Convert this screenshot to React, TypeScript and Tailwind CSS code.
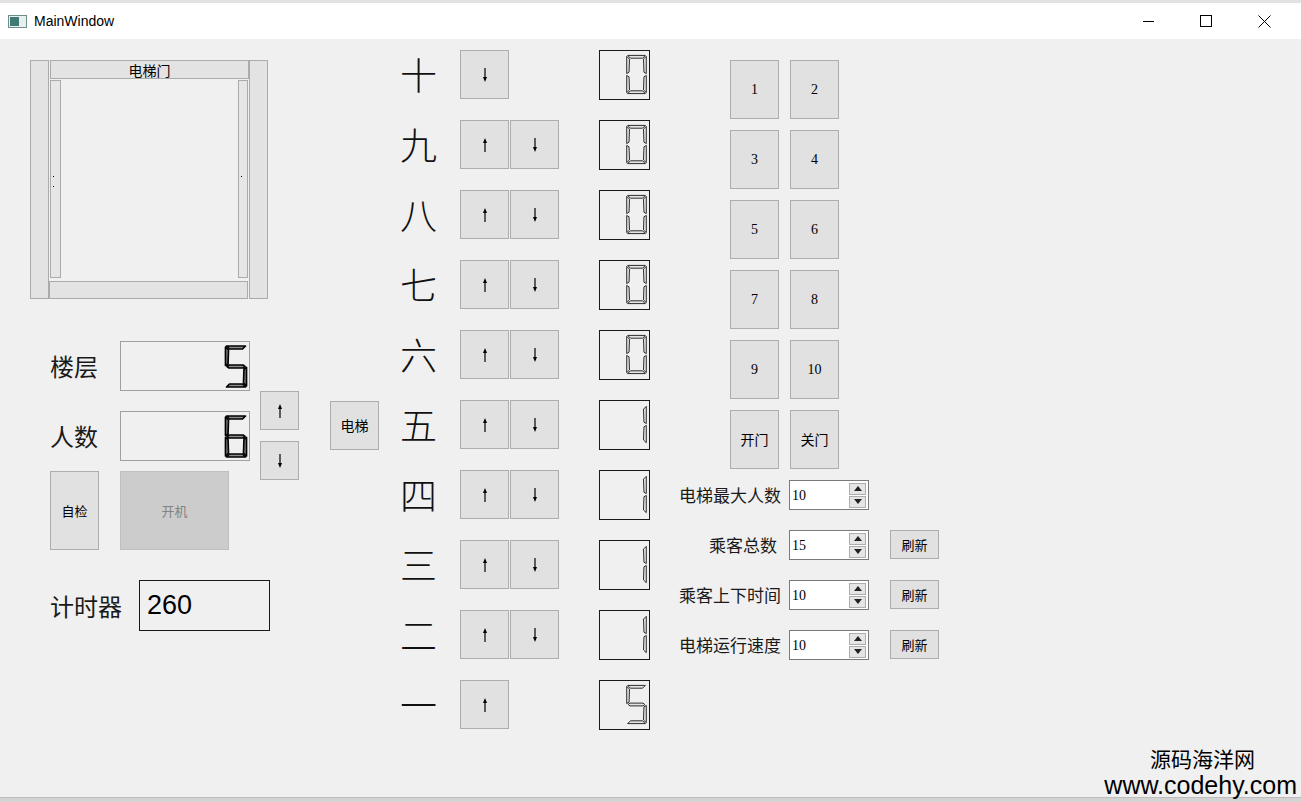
import React from "react"

const cjk = "font-['Noto_Sans_CJK_SC',sans-serif]"
const btn = "flex items-center justify-center border border-[#adadad] bg-[#e1e1e1] text-[13px] text-black"

// seven segment polygons, viewBox 0 0 22 42
const SEG: Record<string, string> = {
  a: "1.5,0.5 20.5,0.5 17.5,3.5 4.5,3.5",
  b: "21.5,1.5 21.5,20 19,18.5 18.5,4.5",
  c: "21.5,22 21.5,40.5 18.5,37.5 19,23.5",
  d: "1.5,41.5 20.5,41.5 17.5,38.5 4.5,38.5",
  e: "0.5,22 0.5,40.5 3.5,37.5 3,23.5",
  f: "0.5,1.5 0.5,20 3,18.5 3.5,4.5",
  g: "2,21 4,19.5 18,19.5 20,21 18,22.5 4,22.5",
}
const DIGITS: Record<string, string> = {
  "0": "abcdef",
  "1": "bc",
  "5": "afgcd",
  "6": "afgedc",
}

function Digit({ v, w, h, bold }: { v: number; w: number; h: number; bold?: boolean }) {
  const on = DIGITS[String(v)] ?? ""
  return (
    <svg width={w} height={h} viewBox="-1 -1 24 44">
      {on.split("").map((s) => (
        <polygon
          key={s}
          points={SEG[s]}
          fill={bold ? "#8c8c8c" : "#e4e4e4"}
          stroke={bold ? "#000" : "#1e1e1e"}
          strokeWidth={bold ? 1.7 : 1}
          strokeLinejoin="round"
        />
      ))}
    </svg>
  )
}

function Arrow({ up }: { up?: boolean }) {
  return (
    <svg width="6" height="14" viewBox="0 0 6 14" className={up ? "" : "rotate-180"}>
      <line x1="3" y1="3" x2="3" y2="14" stroke="#000" strokeWidth="1.2" />
      <polygon points="1,5 3,0 5,5" fill="#000" />
    </svg>
  )
}

function SpinBox({ value }: { value: number }) {
  return (
    <div className="flex h-[30px] w-[80px] items-center border border-[#7a7a7a] bg-white">
      <span className="flex-1 pl-[2px] font-['Liberation_Serif',serif] text-[14px] text-black">{value}</span>
      <div className="mr-[2px] flex h-[25px] w-[17px] flex-col gap-[1px]">
        <div className="flex flex-1 items-center justify-center border border-[#adadad] bg-[#e5e5e5]">
          <svg width="8" height="5" viewBox="0 0 8 5"><polygon points="0,5 4,0 8,5" fill="#222" /></svg>
        </div>
        <div className="flex flex-1 items-center justify-center border border-[#adadad] bg-[#e5e5e5]">
          <svg width="8" height="5" viewBox="0 0 8 5"><polygon points="0,0 8,0 4,5" fill="#222" /></svg>
        </div>
      </div>
    </div>
  )
}

const floors = [
  { c: "十", up: false, down: true, v: 0 },
  { c: "九", up: true, down: true, v: 0 },
  { c: "八", up: true, down: true, v: 0 },
  { c: "七", up: true, down: true, v: 0 },
  { c: "六", up: true, down: true, v: 0 },
  { c: "五", up: true, down: true, v: 1 },
  { c: "四", up: true, down: true, v: 1 },
  { c: "三", up: true, down: true, v: 1 },
  { c: "二", up: true, down: true, v: 1 },
  { c: "一", up: true, down: false, v: 5 },
]

const keypad = ["1", "2", "3", "4", "5", "6", "7", "8", "9", "10", "开门", "关门"]

const settings = [
  { label: "电梯最大人数", v: 10, refresh: false, pr: "" },
  { label: "乘客总数", v: 15, refresh: true, pr: "pr-[4px]" },
  { label: "乘客上下时间", v: 10, refresh: true, pr: "" },
  { label: "电梯运行速度", v: 10, refresh: true, pr: "" },
]

export default function App() {
  return (
    <div className={`relative flex h-[802px] w-[1301px] flex-col overflow-hidden bg-[#f0f0f0] ${cjk}`}>
      {/* Title bar */}
      <div className="flex h-[39px] items-center border-t-[3px] border-[#e2e2e2] bg-white">
        <div className="ml-[8px] flex h-[13px] w-[19px] border border-[#6f8f8c] bg-[#e9efee]">
          <div className="m-[1px] w-[9px] bg-[#3f7a74]" />
        </div>
        <span className="ml-[7px] font-['Liberation_Sans',sans-serif] text-[14px] text-black">MainWindow</span>
        <div className="flex-1" />
        <div className="flex items-center">
          <div className="flex w-[58px] justify-center">
            <div className="h-[1px] w-[11px] bg-black" />
          </div>
          <div className="flex w-[58px] justify-center">
            <div className="h-[12px] w-[12px] border border-black" />
          </div>
          <div className="flex w-[58px] justify-center">
            <svg width="13" height="13" viewBox="0 0 13 13">
              <path d="M0.5 0.5 L12.5 12.5 M12.5 0.5 L0.5 12.5" stroke="#000" strokeWidth="1" />
            </svg>
          </div>
          <div className="w-[8px]" />
        </div>
      </div>

      {/* Client area */}
      <div className="flex flex-1 items-start">
        {/* Left column */}
        <div className="ml-[30px] mt-[21px] flex w-[350px] flex-col">
          {/* Elevator door */}
          <div className="flex h-[239px] w-[238px]">
            <div className="w-[19px] border border-[#ababab] bg-[#e3e3e3]" />
            <div className="flex w-[200px] flex-col">
              <div className="ml-[1px] flex h-[19px] items-center justify-center border border-[#ababab] bg-[#e3e3e3] text-[14px] leading-none text-black">
                电梯门
              </div>
              <div className="flex flex-1 justify-between pb-[3px] pt-[1px]">
                <div className="relative ml-[1px] w-[11px] border border-[#ababab] bg-[#e6e6e6]">
                  <div className="absolute left-[2px] top-[95px] h-[1px] w-[1px] bg-black" />
                  <div className="absolute left-[2px] top-[105px] h-[1px] w-[1px] bg-black" />
                </div>
                <div className="relative mr-[1px] w-[10px] border border-[#ababab] bg-[#e6e6e6]">
                  <div className="absolute left-[2px] top-[95px] h-[1px] w-[1px] bg-black" />
                </div>
              </div>
              <div className="h-[18px] w-[199px] border border-[#ababab] bg-[#e3e3e3]" />
            </div>
            <div className="w-[19px] border border-[#ababab] bg-[#e3e3e3]" />
          </div>

          {/* Floor / passengers */}
          <div className="mt-[42px] flex items-start">
            <div className="ml-[20px] flex w-[200px] flex-col">
              <div className="flex h-[50px] items-center">
                <span className="w-[70px] text-[24px] text-[#1a1a1a]">楼层</span>
                <div className="flex h-[50px] w-[130px] items-center justify-end border border-[#a0a0a0] pr-[1px]">
                  <Digit v={5} w={24} h={45} bold />
                </div>
              </div>
              <div className="mt-[20px] flex h-[50px] items-center">
                <span className="w-[70px] text-[24px] text-[#1a1a1a]">人数</span>
                <div className="flex h-[50px] w-[130px] items-center justify-end border border-[#a0a0a0] pr-[1px]">
                  <Digit v={6} w={24} h={45} bold />
                </div>
              </div>
              <div className="mt-[10px] flex">
                <div className={`${btn} h-[79px] w-[49px]`}>自检</div>
                <div className="ml-[21px] flex h-[79px] w-[109px] items-center justify-center border border-[#bfbfbf] bg-[#cccccc] text-[13px] text-[#838383]">
                  开机
                </div>
              </div>
            </div>
            <div className="ml-[10px] mt-[50px] flex flex-col gap-[11px]">
              <div className={`${btn} h-[39px] w-[39px]`}><Arrow up /></div>
              <div className={`${btn} h-[39px] w-[39px]`}><Arrow /></div>
            </div>
            <div className={`${btn} ml-[31px] mt-[60px] h-[49px] w-[49px] text-[14px]`}>电梯</div>
          </div>

          {/* Timer */}
          <div className="ml-[20px] mt-[30px] flex items-center">
            <span className="w-[89px] text-[24px] text-[#1a1a1a]">计时器</span>
            <div className="flex h-[51px] w-[131px] items-center border border-[#1a1a1a] pl-[7px] font-['Liberation_Sans',sans-serif] text-[27px] text-black">
              260
            </div>
          </div>
        </div>

        {/* Floor call column */}
        <div className="ml-[20px] mt-[11px] flex flex-col gap-[21px]">
          {floors.map((f) => (
            <div key={f.c} className="flex h-[49px] items-center">
              <span className="w-[60px] text-[37px] font-light leading-none text-[#111]">{f.c}</span>
              <div className="flex h-[49px] w-[100px] gap-[1px]">
                {f.up && <div className={`${btn} h-[49px] w-[49px]`}><Arrow up /></div>}
                {f.down && <div className={`${btn} h-[49px] w-[49px]`}><Arrow /></div>}
              </div>
              <div className="ml-[39px] flex h-[50px] w-[51px] items-center justify-end border border-[#1a1a1a] pr-[1px]">
                <Digit v={f.v} w={23} h={41} />
              </div>
            </div>
          ))}
        </div>

        {/* Keypad and settings */}
        <div className="ml-[29px] mt-[21px] flex flex-col">
          <div className="ml-[51px] grid w-[109px] grid-cols-2 gap-x-[11px] gap-y-[11px]">
            {keypad.map((k) => (
              <div
                key={k}
                className={`${btn} h-[59px] w-[49px] ${/^\d+$/.test(k) ? "font-['Liberation_Serif',serif] text-[14px]" : "text-[14px]"}`}
              >
                {k}
              </div>
            ))}
          </div>
          <div className="mt-[11px] flex flex-col gap-[20px]">
            {settings.map((s) => (
              <div key={s.label} className="flex h-[30px] items-center">
                <span className={`w-[102px] whitespace-nowrap text-right text-[17px] text-[#1a1a1a] ${s.pr}`}>{s.label}</span>
                <div className="ml-[8px]">
                  <SpinBox value={s.v} />
                </div>
                {s.refresh && (
                  <div className={`${btn} ml-[21px] h-[29px] w-[49px] self-start`}>刷新</div>
                )}
              </div>
            ))}
          </div>
        </div>
      </div>

      {/* bottom edge */}
      <div className="h-[5px] border-t border-[#bdbdbd] bg-[#d3d3d3]" />

      {/* Watermark */}
      <div className="absolute bottom-[5px] right-[4px] flex flex-col items-end gap-[4px] text-black">
        <span className="mr-[42px] block text-[21px] leading-[22px]">源码海洋网</span>
        <span className="block font-['Liberation_Sans',sans-serif] text-[25px] leading-[24px]">www.codehy.com</span>
      </div>
    </div>
  )
}
